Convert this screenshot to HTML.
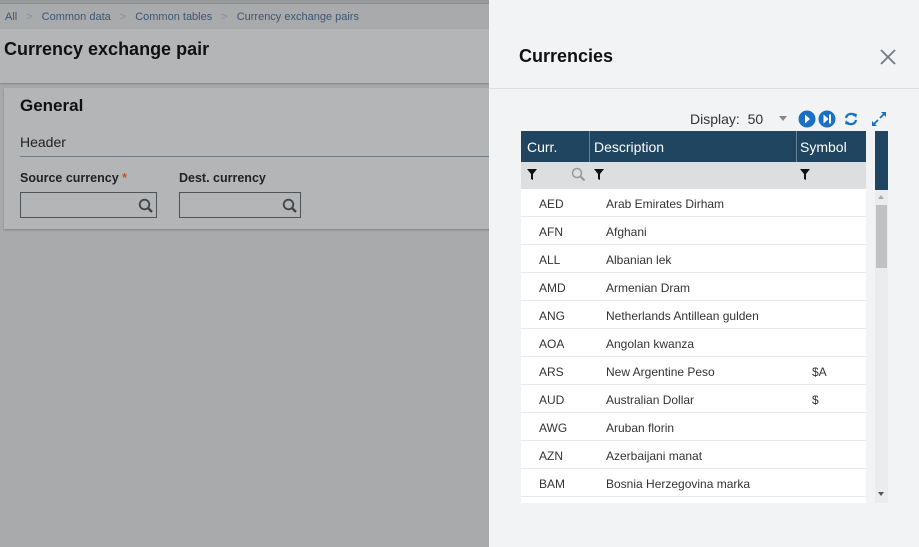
<!DOCTYPE html>
<html><head><meta charset="utf-8"><style>
*{box-sizing:border-box;margin:0;padding:0}
body{width:919px;height:547px;overflow:hidden;background:#a9aaab;font-family:"Liberation Sans",sans-serif;position:relative}
.abs{position:absolute}
.bc{left:5px;top:11px;font-size:11px;color:#3e5673;white-space:nowrap}
.bc span.s{color:#8a8f95;margin:0 9px}
.tb{left:0;top:29px;width:489px;height:54px;background:#b4b5b6;box-shadow:0 1px 2px rgba(0,0,0,.25)}
.tb h1{position:absolute;left:4px;top:10px;font-size:18px;font-weight:bold;color:#111}
.card{left:4px;top:88px;width:490px;height:141px;background:#b4b5b6;box-shadow:0 1px 2px rgba(0,0,0,.25)}
.lbl{font-size:12.5px;font-weight:bold;color:#222}
.inp{width:137px;height:26px;border:1px solid #4e5358}
.panel{left:489px;top:0;width:430px;height:547px;background:#f1f3f4}
.ph{left:0;top:0;width:430px;height:89px;border-bottom:1px solid #dcdfe1}
.row{position:absolute;left:32px;width:345px;height:28px;background:#fff;border-bottom:1px solid #e8eaeb;font-size:12px;color:#333}
.row span{position:absolute;top:8px}
</style></head><body>
<div class="abs" style="left:0;top:0;width:489px;height:4px;background:#9a9b9c;border-bottom:1px solid #8a8b8c"></div>
<div class="abs bc">All<span class="s">&gt;</span>Common data<span class="s">&gt;</span>Common tables<span class="s">&gt;</span>Currency exchange pairs</div>
<div class="abs tb"><h1>Currency exchange pair</h1></div>
<div class="abs card">
 <div class="abs" style="left:16px;top:8px;font-size:17px;font-weight:bold;color:#111">General</div>
 <div class="abs" style="left:16px;top:46px;font-size:14px;color:#222">Header</div>
 <div class="abs" style="left:16px;top:68px;width:480px;height:1px;background:#6f7c87"></div>
 <div class="abs lbl" style="left:16px;top:83px">Source currency <span style="color:#c0531e">*</span></div>
 <div class="abs lbl" style="left:175px;top:83px">Dest. currency</div>
 <div class="abs inp" style="left:16px;top:104px"><svg class="abs" style="right:2px;top:5px" width="16" height="16" viewBox="0 0 16 16"><circle cx="6.5" cy="6.5" r="4.8" fill="none" stroke="#444" stroke-width="1.8"/><path d="M10 10l4 4" stroke="#444" stroke-width="2.4"/></svg></div>
 <div class="abs inp" style="left:175px;top:104px;width:122px"><svg class="abs" style="right:2px;top:5px" width="16" height="16" viewBox="0 0 16 16"><circle cx="6.5" cy="6.5" r="4.8" fill="none" stroke="#444" stroke-width="1.8"/><path d="M10 10l4 4" stroke="#444" stroke-width="2.4"/></svg></div>
</div>
<div class="abs panel">
 <div class="abs ph"></div>
 <div class="abs" style="left:30px;top:46px;font-size:18px;font-weight:bold;color:#111">Currencies</div>
 <svg class="abs" style="left:391px;top:49px" width="16" height="16" viewBox="0 0 16 16"><path d="M1 1l14 14M15 1L1 15" stroke="#6f7a84" stroke-width="1.8"/></svg>
 <div class="abs" style="left:201px;top:111px;font-size:14px;color:#333">Display:&nbsp; 50</div>
 <div class="abs" style="left:290px;top:116px;width:0;height:0;border-left:4px solid transparent;border-right:4px solid transparent;border-top:5px solid #888"></div>
 <svg class="abs" style="left:309px;top:110px" width="18" height="18" viewBox="0 0 18 18"><circle cx="9" cy="9" r="8.5" fill="#1b6fc4"/><path d="M7 4.5l5 4.5-5 4.5z" fill="#fff"/></svg>
 <svg class="abs" style="left:329px;top:110px" width="18" height="18" viewBox="0 0 18 18"><circle cx="9" cy="9" r="8.5" fill="#1b6fc4"/><path d="M5.5 4.5l5 4.5-5 4.5z" fill="#fff"/><rect x="11" y="4.5" width="2" height="9" fill="#fff"/></svg>
 <svg class="abs" style="left:354px;top:111px" width="16" height="16" viewBox="0 0 16 16"><path d="M3 7a5 5 0 0 1 9-2M13 9a5 5 0 0 1-9 2" fill="none" stroke="#1b6fc4" stroke-width="2.2"/><path d="M10 2l4 1-1 4zM6 14l-4-1 1-4z" fill="#1b6fc4"/></svg>
 <svg class="abs" style="left:382px;top:111px" width="16" height="16" viewBox="0 0 16 16"><path d="M9 7l5-5M7 9l-5 5" stroke="#1b6fc4" stroke-width="1.8"/><path d="M10 1h5v5zM1 10v5h5z" fill="#1b6fc4"/></svg>
 <div class="abs" style="left:32px;top:131px;width:345px;height:31px;background:#1f4560;color:#fff;font-size:14px">
  <span class="abs" style="left:6px;top:8px">Curr.</span>
  <span class="abs" style="left:68px;top:0;width:1px;height:31px;background:#6a8194"></span>
  <span class="abs" style="left:73px;top:8px">Description</span>
  <span class="abs" style="left:275px;top:0;width:1px;height:31px;background:#6a8194"></span>
  <span class="abs" style="left:279px;top:8px">Symbol</span>
 </div>
 <div class="abs" style="left:386px;top:131px;width:13px;height:59px;background:#1f4560"></div>
 <div class="abs" style="left:32px;top:162px;width:345px;height:27px;background:#dddedf">
  <svg class="abs" style="left:6px;top:7px" width="10" height="11" viewBox="0 0 10 11"><path d="M0 0h10L6 5v6L4 10V5z" fill="#111"/></svg>
  <svg class="abs" style="left:50px;top:5px" width="15" height="15" viewBox="0 0 15 15"><circle cx="6" cy="6" r="4.5" fill="none" stroke="#999" stroke-width="1.5"/><path d="M9.5 9.5l4 4" stroke="#999" stroke-width="2"/></svg>
  <svg class="abs" style="left:73px;top:7px" width="10" height="11" viewBox="0 0 10 11"><path d="M0 0h10L6 5v6L4 10V5z" fill="#111"/></svg>
  <svg class="abs" style="left:279px;top:7px" width="10" height="11" viewBox="0 0 10 11"><path d="M0 0h10L6 5v6L4 10V5z" fill="#111"/></svg>
 </div>
 <div class="row" style="top:189px"><span style="left:18px">AED</span><span style="left:85px">Arab Emirates Dirham</span></div>
 <div class="row" style="top:217px"><span style="left:18px">AFN</span><span style="left:85px">Afghani</span></div>
 <div class="row" style="top:245px"><span style="left:18px">ALL</span><span style="left:85px">Albanian lek</span></div>
 <div class="row" style="top:273px"><span style="left:18px">AMD</span><span style="left:85px">Armenian Dram</span></div>
 <div class="row" style="top:301px"><span style="left:18px">ANG</span><span style="left:85px">Netherlands Antillean gulden</span></div>
 <div class="row" style="top:329px"><span style="left:18px">AOA</span><span style="left:85px">Angolan kwanza</span></div>
 <div class="row" style="top:357px"><span style="left:18px">ARS</span><span style="left:85px">New Argentine Peso</span><span style="left:291px">$A</span></div>
 <div class="row" style="top:385px"><span style="left:18px">AUD</span><span style="left:85px">Australian Dollar</span><span style="left:291px">$</span></div>
 <div class="row" style="top:413px"><span style="left:18px">AWG</span><span style="left:85px">Aruban florin</span></div>
 <div class="row" style="top:441px"><span style="left:18px">AZN</span><span style="left:85px">Azerbaijani manat</span></div>
 <div class="row" style="top:469px"><span style="left:18px">BAM</span><span style="left:85px">Bosnia Herzegovina marka</span></div>
 <div class="row" style="top:497px;height:6px;border:none"></div>
 <div class="abs" style="left:386px;top:190px;width:13px;height:313px;background:#ececec"></div>
 <div class="abs" style="left:389px;top:195px;border-left:3.5px solid transparent;border-right:3.5px solid transparent;border-bottom:4px solid #aaa"></div>
 <div class="abs" style="left:387px;top:205px;width:11px;height:63px;background:#c1c1c1"></div>
 <div class="abs" style="left:389px;top:492px;border-left:3.5px solid transparent;border-right:3.5px solid transparent;border-top:4px solid #555"></div>
</div>
</body></html>
